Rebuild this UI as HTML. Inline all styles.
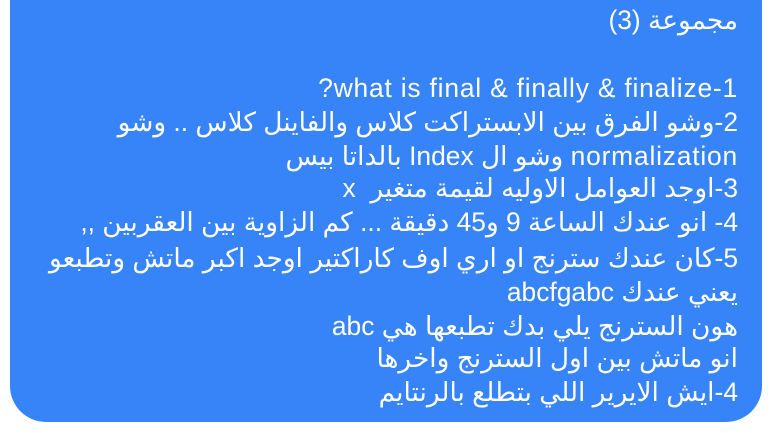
<!DOCTYPE html>
<html><head><meta charset="utf-8"><style>
html,body{margin:0;padding:0;background:#fff;width:781px;height:433px;overflow:hidden}
.b{position:absolute;left:10px;top:-40px;width:752px;height:462px;background:#3684F7;border-radius:36px}
.l{position:absolute;right:43px;white-space:nowrap;color:#fff;font-family:"Liberation Sans","DejaVu Sans",sans-serif;font-size:26.4px;line-height:34px;direction:rtl;unicode-bidi:embed;text-align:right}
.e{letter-spacing:0.8px}
</style></head><body>
<div class="b"></div>
<div class="l" style="top:3px">مجموعة (3)</div>
<div class="l e" style="top:71px">what is final &amp; finally &amp; finalize-1?</div>
<div class="l" style="top:105px">2-وشو الفرق بين الابستراكت كلاس والفاينل كلاس .. وشو</div>
<div class="l" style="top:139px"><span class="e">normalization</span> وشو ال Index بالداتا بيس</div>
<div class="l" style="top:171px">3-اوجد العوامل الاوليه لقيمة متغير&nbsp; x</div>
<div class="l" style="top:205px">4- انو عندك الساعة 9 و45 دقيقة ... كم الزاوية بين العقربين ,,</div>
<div class="l" style="top:241px">5-كان عندك سترنج او اري اوف كاراكتير اوجد اكبر ماتش وتطبعو</div>
<div class="l" style="top:275px">يعني عندك abcfgabc</div>
<div class="l" style="top:309px">هون السترنج يلي بدك تطبعها هي abc</div>
<div class="l" style="top:341px">انو ماتش بين اول السترنج واخرها</div>
<div class="l" style="top:375px">4-ايش الايرير اللي بتطلع بالرنتايم</div>
</body></html>
